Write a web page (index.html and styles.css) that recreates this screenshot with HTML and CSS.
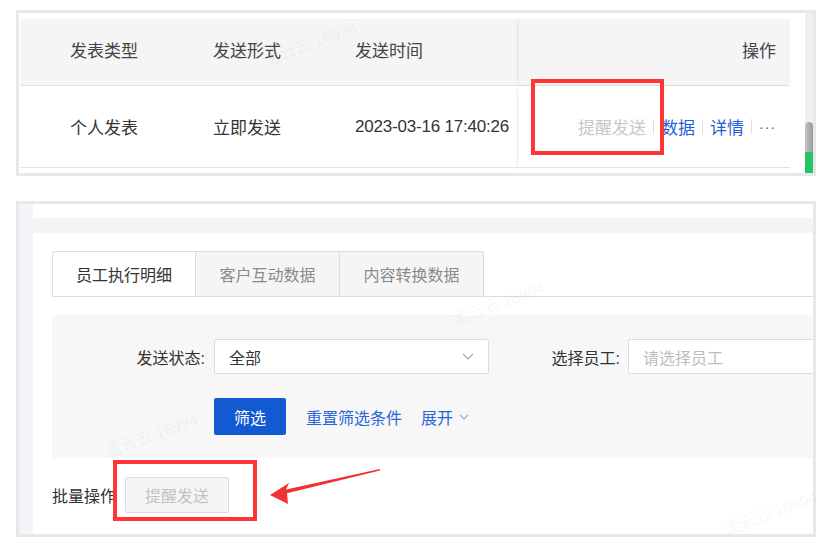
FILE: index.html
```html
<!DOCTYPE html>
<html lang="zh-CN">
<head>
    <meta charset="UTF-8">
    <title>提醒发送</title>
    <link rel="stylesheet" href="styles.css">
</head>
<body>
<div class="shot top-shot">
    <div class="table-wrap">
        <div class="row head">
            <div class="cell">发表类型</div>
            <div class="cell">发送形式</div>
            <div class="cell">发送时间</div>
            <div class="cell ops">操作</div>
        </div>
        <div class="row data">
            <div class="cell">个人发表</div>
            <div class="cell">立即发送</div>
            <div class="cell date">2023-03-16 17:40:26</div>
            <div class="cell ops">
                <span class="act off">提醒发送</span>
                <span class="sep"></span>
                <span class="act">数据</span>
                <span class="sep"></span>
                <span class="act">详情</span>
                <span class="sep"></span>
                <span class="act more">···</span>
            </div>
        </div>
    </div>
    <div class="scroll">
        <div class="thumb"></div>
        <div class="thumb-green"></div>
    </div>
</div>

<div class="shot bottom-shot">
    <div class="side"></div>
    <div class="main">
        <div class="topbar"></div>
        <div class="card">
            <div class="tabs">
                <div class="tab active">员工执行明细</div>
                <div class="tab">客户互动数据</div>
                <div class="tab">内容转换数据</div>
            </div>
            <div class="filter">
                <div class="frow">
                    <span class="flabel">发送状态:</span>
                    <div class="select">
                        <span>全部</span>
                        <svg width="12" height="7" viewBox="0 0 12 7"><polyline points="1,1 6,6 11,1" fill="none" stroke="#a8a8a8" stroke-width="1.2"/></svg>
                    </div>
                    <span class="flabel flabel2">选择员工:</span>
                    <div class="select select2"><span class="ph">请选择员工</span></div>
                </div>
                <div class="frow btns">
                    <button class="btn-primary">筛选</button>
                    <a class="link">重置筛选条件</a>
                    <a class="link expand">展开
                        <svg width="10" height="6" viewBox="0 0 10 6"><polyline points="1,1 5,5 9,1" fill="none" stroke="#8fa9e3" stroke-width="1.1"/></svg>
                    </a>
                </div>
            </div>
            <div class="batch">
                <span>批量操作</span>
                <button class="btn-off">提醒发送</button>
            </div>
        </div>
    </div>
</div>

<!-- 标注 -->
<div class="mark mark-top"></div>
<div class="mark mark-bottom"></div>
<svg class="arrow" width="130" height="50" viewBox="0 0 130 50">
    <polygon points="10,35 29,23 26,29.5 120,9 120,10.6 27,33.2 28,44" fill="#f03232"/>
</svg>

<span class="wm wm1">孟云云 16994</span>
<span class="wm wm2">孟云云 16994</span>
<span class="wm wm3">孟云云 16994</span>
<span class="wm wm4">孟云云 16994</span>
</body>
</html>
```

FILE: styles.css
```css
body {
    margin: 0;
    padding: 10px 0 0 16px;
    background: #fff;
    font-family: "Liberation Sans", "Noto Sans CJK SC", sans-serif;
    color: #333;
}
.shot {
    width: 800px;
    box-sizing: border-box;
    border: 3px solid #e8e8e8;
    display: flex;
    overflow: hidden;
}

/* 上图：表格 */
.top-shot {
    height: 166px;
    padding: 6px 0 0 1px;
    font-size: 17px;
}
.table-wrap {
    width: 770px;
    flex-shrink: 0;
}
.row {
    display: grid;
    grid-template-columns: 143px 142px 214px 271px;
    border-bottom: 1px solid #e4e4e4;
}
.row.head {
    height: 66px;
    background: #f5f5f5;
    color: #444;
}
.row.data {
    height: 81px;
}
.cell {
    display: flex;
    align-items: center;
    padding-left: 50px;
    white-space: nowrap;
    min-width: 0;
}
.head .cell {
    padding-bottom: 5px;
}
.date {
    letter-spacing: -0.2px;
}
.ops {
    justify-content: flex-end;
    padding-left: 0;
    padding-right: 14px;
    box-shadow: -3px 0 5px -2px rgba(0, 0, 0, 0.09);
}
.act {
    color: #1f5fd8;
}
.act.off {
    color: #c8c8c8;
}
.act.more {
    font-size: 14px;
    letter-spacing: 1px;
}
.sep {
    width: 1px;
    height: 15px;
    background: #e0e0e0;
    margin: 0 7px;
}
.scroll {
    width: 8px;
    flex-shrink: 0;
    margin-left: 15px;
    margin-top: -6px;
    background: #f0f0f0;
    display: flex;
    flex-direction: column;
}
.thumb {
    margin-top: 109px;
    height: 30px;
    border-radius: 4px 4px 0 0;
    background: linear-gradient(90deg, #c4c4c4, #9a9a9a);
}
.thumb-green {
    flex: 1;
    background: #25c466;
}

/* 下图：筛选 */
.bottom-shot {
    margin-top: 25px;
    height: 336px;
    font-size: 16px;
}
.side {
    width: 14px;
    flex-shrink: 0;
    background: #f4f5f8;
}
.main {
    flex: 1;
    min-width: 0;
    display: flex;
    flex-direction: column;
    background: #f4f5f8;
}
.topbar {
    height: 14px;
    background: #fff;
}
.card {
    flex: 1;
    margin-top: 15px;
    background: #fff;
    padding: 18px 0 0 19px;
}
.tabs {
    display: flex;
    border-bottom: 1px solid #dcdcdc;
}
.tab {
    width: 144px;
    height: 45px;
    box-sizing: border-box;
    border: 1px solid #dcdcdc;
    border-bottom: none;
    border-left: none;
    background: #f5f5f5;
    color: #8a8a8a;
    display: flex;
    align-items: center;
    justify-content: center;
}
.tab:first-child {
    border-left: 1px solid #dcdcdc;
    border-radius: 3px 0 0 0;
}
.tab:last-child {
    border-radius: 0 3px 0 0;
}
.tab.active {
    background: #fff;
    color: #333;
}
.filter {
    margin-top: 18px;
    background: #f7f7f7;
    padding: 24px 0 23px 0;
}
.frow {
    display: flex;
    align-items: center;
    white-space: nowrap;
}
.flabel {
    width: 153px;
    flex-shrink: 0;
    text-align: right;
    margin-right: 9px;
    color: #333;
}
.flabel2 {
    width: 131px;
    margin-right: 8px;
}
.select {
    width: 275px;
    height: 35px;
    flex-shrink: 0;
    box-sizing: border-box;
    background: #fff;
    border: 1px solid #dcdcdc;
    border-radius: 2px;
    padding: 0 14px;
    display: flex;
    align-items: center;
    justify-content: space-between;
}
.select2 {
    width: 260px;
}
.ph {
    color: #bdbdbd;
}
.btns {
    margin-top: 24px;
    padding-left: 162px;
}
.btn-primary {
    width: 72px;
    height: 37px;
    border: none;
    border-radius: 2px;
    background: #1259d2;
    color: #fff;
    font: inherit;
    padding: 0;
}
.link {
    color: #2a66d6;
    margin-left: 20px;
    display: flex;
    align-items: center;
}
.expand {
    margin-left: 19px;
}
.expand svg {
    margin-left: 6px;
}
.batch {
    margin-top: 19px;
    display: flex;
    align-items: center;
}
.btn-off {
    margin-left: 9px;
    width: 104px;
    height: 36px;
    border: 1px solid #dcdcdc;
    border-radius: 2px;
    background: #f5f5f5;
    color: #c2c2c2;
    font: inherit;
    padding: 0;
}

/* 红框标注 */
.mark {
    position: absolute;
    box-sizing: border-box;
    border: 4px solid #ff3434;
}
.mark-top {
    left: 531px;
    top: 79px;
    width: 133px;
    height: 76px;
}
.mark-bottom {
    left: 113px;
    top: 460px;
    width: 144px;
    height: 61px;
}
.arrow {
    position: absolute;
    left: 260px;
    top: 460px;
}

/* 水印 */
.wm {
    position: absolute;
    font-size: 16px;
    color: rgba(0, 0, 0, 0.05);
    transform: rotate(-20deg);
    white-space: nowrap;
}
.wm1 { left: 262px; top: 30px; }
.wm2 { left: 450px; top: 290px; }
.wm3 { left: 103px; top: 422px; }
.wm4 { left: 722px; top: 500px; }
```
